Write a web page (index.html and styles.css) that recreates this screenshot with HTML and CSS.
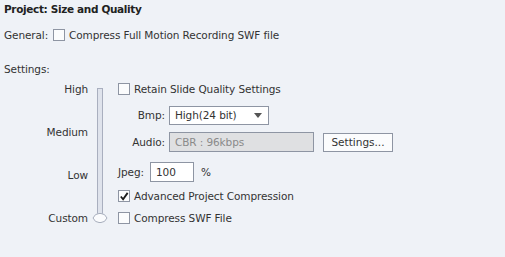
FILE: index.html
```html
<!DOCTYPE html>
<html lang="en">
  <head>
    <meta charset="UTF-8" />
    <title>Project: Size and Quality</title>
    <link rel="stylesheet" href="styles.css">
  </head>
  <body>
    <div class="panel">
      <div class="title">Project: Size and Quality</div>

      <!-- General -->
      <div class="general">
        <span class="field-label">General:</span>
        <label class="check"><span class="box"></span>Compress Full Motion Recording SWF file</label>
      </div>

      <div class="settings-label">Settings:</div>

      <!-- Settings body: quality slider + options -->
      <div class="settings">
        <div class="levels">
          <span>High</span>
          <span>Medium</span>
          <span>Low</span>
          <span>Custom</span>
        </div>

        <div class="slider">
          <div class="track"></div>
          <svg class="thumb" width="16" height="12" viewBox="0 0 16 12">
            <path d="M1 6 Q3 1.5 7 1.5 H9 Q13 1.5 15 6 Q13 10.5 9 10.5 H7 Q3 10.5 1 6 Z" fill="#fafbfd" stroke="#a7aebd" stroke-width="1" />
          </svg>
        </div>

        <div class="options">
          <label class="check row-1"><span class="box"></span>Retain Slide Quality Settings</label>

          <div class="row row-2">
            <span class="row-label">Bmp:</span>
            <div class="select">
              <span>High(24 bit)</span>
              <span class="arrow"></span>
            </div>
          </div>

          <div class="row row-3">
            <span class="row-label">Audio:</span>
            <div class="input disabled">CBR : 96kbps</div>
            <button class="btn">Settings...</button>
          </div>

          <div class="row row-4">
            <span class="jpeg-label">Jpeg:</span>
            <div class="input jpeg">100</div>
            <span class="unit">%</span>
          </div>

          <label class="check row-5"><span class="box checked">
            <svg width="11" height="11" viewBox="0 0 11 11"><path d="M2 5.5 L4.5 8.5 L9.5 1.5" fill="none" stroke="#1a1a1a" stroke-width="2" /></svg>
          </span>Advanced Project Compression</label>

          <label class="check row-6"><span class="box"></span>Compress SWF File</label>
        </div>
      </div>
    </div>
  </body>
</html>
```

FILE: styles.css
```css
/* General Styles */
body {
  margin: 0;
  background: #eff2f7;
  font-family: "DejaVu Sans", Verdana, sans-serif;
  font-size: 10.5px;
  letter-spacing: -0.1px;
  color: #333;
}

.panel {
  height: 257px;
  padding: 0 4px;
}

.title {
  font-weight: bold;
  font-size: 10.5px;
  letter-spacing: -0.35px;
  color: #222;
  padding-top: 2px;
  height: 15px;
  line-height: 15px;
}

.general {
  display: flex;
  align-items: center;
  margin-top: 10px;
  height: 16px;
}

.field-label {
  width: 49px;
}

.check {
  display: flex;
  align-items: center;
  height: 16px;
}

.box {
  box-sizing: border-box;
  width: 12px;
  height: 12px;
  border: 1px solid #8e95a3;
  background: #fbfcfd;
  margin-right: 4px;
  display: flex;
  align-items: center;
  justify-content: center;
}

.settings-label {
  margin-top: 18px;
  height: 16px;
  line-height: 16px;
}

/* Settings body */
.settings {
  display: flex;
  margin-top: 4px;
}

.levels {
  width: 84px;
  height: 145px;
  display: flex;
  flex-direction: column;
  justify-content: space-between;
  align-items: flex-end;
}

.levels span {
  height: 16px;
  line-height: 16px;
}

.slider {
  width: 30px;
  position: relative;
}

.track {
  box-sizing: border-box;
  width: 6px;
  height: 128px;
  margin: 7px 0 0 9px;
  border: 1px solid #a9afbf;
  background: #dfe3ec;
}

.thumb {
  position: absolute;
  left: 4px;
  top: 131px;
}

.options {
  display: flex;
  flex-direction: column;
}

.row {
  display: flex;
  align-items: center;
  height: 20px;
}

.row-2 {
  margin-top: 8px;
}

.row-3 {
  margin-top: 7px;
}

.row-4 {
  margin-top: 10px;
}

.row-5 {
  margin-top: 6px;
}

.row-6 {
  margin-top: 6px;
}

.row-label {
  width: 47px;
  text-align: right;
  margin-right: 4px;
}

.select {
  box-sizing: border-box;
  width: 100px;
  height: 19px;
  border: 1px solid #8e95a3;
  background: #fff;
  display: flex;
  align-items: center;
  justify-content: space-between;
  padding: 0 6px 0 5px;
}

.arrow {
  width: 0;
  height: 0;
  border-left: 4px solid transparent;
  border-right: 4px solid transparent;
  border-top: 5px solid #555;
}

.input {
  box-sizing: border-box;
  height: 20px;
  line-height: 18px;
  border: 1px solid #8e95a3;
  background: #fff;
  padding: 0 5px;
}

.input.disabled {
  width: 145px;
  background: #dfe0e2;
  color: #8a8a8a;
}

.btn {
  box-sizing: border-box;
  height: 19px;
  width: 70px;
  margin-left: 9px;
  border: 1px solid #8e95a3;
  background: #fbfcfd;
  font: inherit;
  color: #333;
  padding: 0;
}

.jpeg-label {
  width: 32px;
}

.input.jpeg {
  width: 44px;
}

.unit {
  margin-left: 7px;
}
```
